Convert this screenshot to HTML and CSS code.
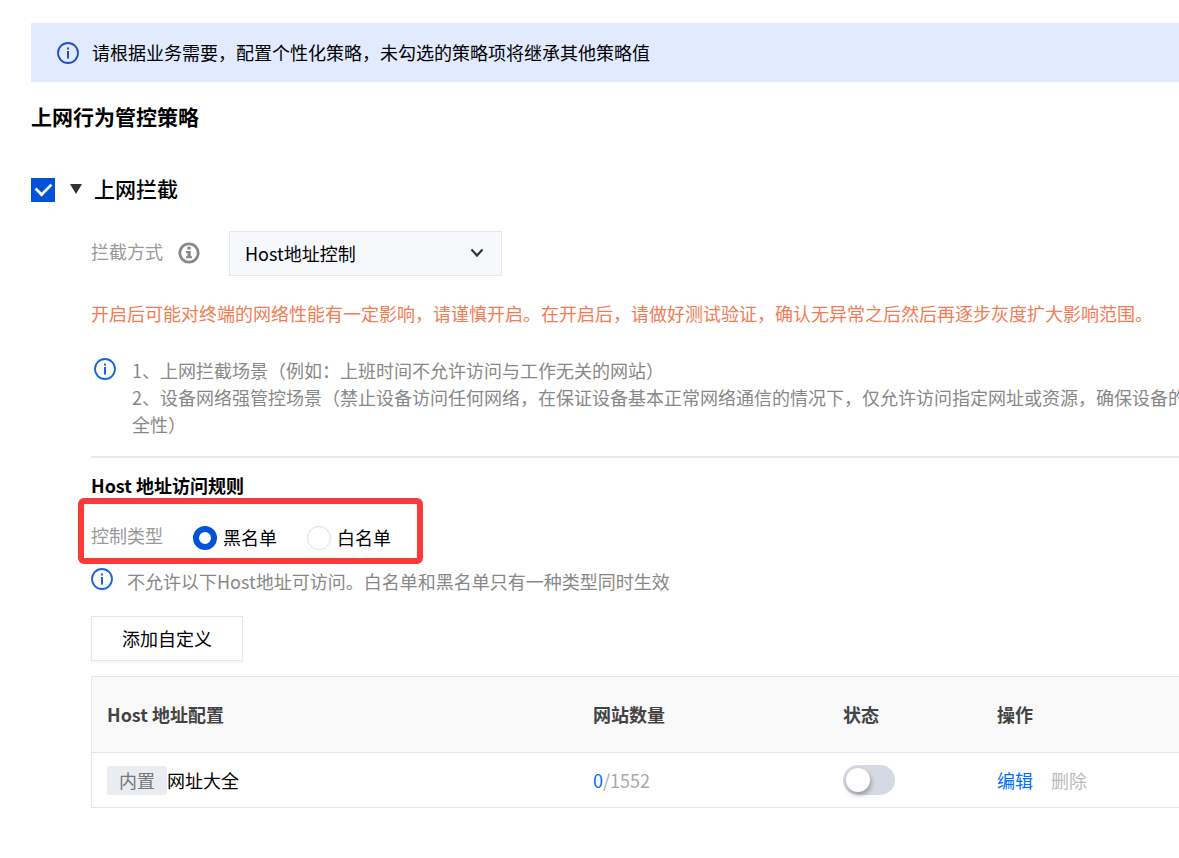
FILE: index.html
```html
<!DOCTYPE html>
<html lang="zh-CN">
<head>
  <meta charset="UTF-8">
  <meta name="viewport" content="width=device-width, initial-scale=1.0">
  <title>上网行为管控策略</title>
  <link rel="stylesheet" href="styles.css">
</head>
<body>
  <svg class="sprite" aria-hidden="true">
    <symbol id="icon-info" viewBox="0 0 22 22">
      <circle cx="11" cy="11" r="10" fill="none" stroke="currentColor" stroke-width="1.8"/>
      <rect x="10" y="5.5" width="2" height="2" fill="currentColor"/>
      <rect x="10" y="9" width="2" height="7.5" fill="currentColor"/>
    </symbol>
  </svg>

  <main class="page">
    <div class="banner">
      <svg class="icon"><use href="#icon-info"/></svg>
      <span>请根据业务需要，配置个性化策略，未勾选的策略项将继承其他策略值</span>
    </div>

    <h1 class="title">上网行为管控策略</h1>

    <div class="section-head">
      <input type="checkbox" class="check" id="block" checked>
      <svg class="caret" viewBox="0 0 12 10"><path d="M0 0h12L6 10z" fill="#333"/></svg>
      <label class="section-name" for="block">上网拦截</label>
    </div>

    <section class="content">
      <div class="mode-row">
        <label class="label" for="mode">拦截方式</label>
        <svg class="help" viewBox="0 0 22 22">
          <circle cx="11" cy="11" r="9.2" fill="none" stroke="#888" stroke-width="2.8"/>
          <path d="M9.3 4.8h3.4v2.6H9.3zM8 9h4.7v5.3H14v2H8v-2h1.5V11H8z" fill="#888"/>
        </svg>
        <div class="select-box">
          <select class="select" id="mode">
            <option>Host地址控制</option>
          </select>
          <svg class="arrow" viewBox="0 0 14 10"><path d="M1.5 1.5L7 7.5l5.5-6" fill="none" stroke="#333" stroke-width="2.2"/></svg>
        </div>
      </div>

      <p class="warning">开启后可能对终端的网络性能有一定影响，请谨慎开启。在开启后，请做好测试验证，确认无异常之后然后再逐步灰度扩大影响范围。</p>

      <div class="notes">
        <svg class="icon"><use href="#icon-info"/></svg>
        <p>1、上网拦截场景（例如：上班时间不允许访问与工作无关的网站）<br>2、设备网络强管控场景（禁止设备访问任何网络，在保证设备基本正常网络通信的情况下，仅允许访问指定网址或资源，确保设备的<br>全性）</p>
      </div>

      <h2 class="subtitle">Host 地址访问规则</h2>

      <div class="type-box" role="radiogroup" aria-labelledby="type-label">
        <span class="label" id="type-label">控制类型</span>
        <label class="option"><input type="radio" class="radio" name="type" checked>黑名单</label>
        <label class="option"><input type="radio" class="radio" name="type">白名单</label>
      </div>

      <div class="tip">
        <svg class="icon"><use href="#icon-info"/></svg>
        <span>不允许以下Host地址可访问。白名单和黑名单只有一种类型同时生效</span>
      </div>

      <button type="button" class="btn">添加自定义</button>

      <table class="table">
        <colgroup>
          <col class="col-host">
          <col class="col-count">
          <col class="col-state">
          <col>
        </colgroup>
        <thead>
          <tr><th>Host 地址配置</th><th>网站数量</th><th>状态</th><th>操作</th></tr>
        </thead>
        <tbody>
          <tr>
            <td><div class="host"><span class="tag">内置</span><span>网址大全</span></div></td>
            <td class="count"><a href="#">0</a>/1552</td>
            <td><input type="checkbox" role="switch" class="switch" aria-label="状态"></td>
            <td><div class="actions"><a href="#">编辑</a><button type="button" class="delete" disabled>删除</button></div></td>
          </tr>
        </tbody>
      </table>
    </section>
  </main>
</body>
</html>
```

FILE: styles.css
```css
* {
  box-sizing: border-box;
}
body {
  margin: 0;
  background: #fff;
  color: #000;
  font-family: "Noto Sans CJK SC", sans-serif;
  font-size: 18px;
  line-height: 27px;
  overflow-x: hidden;
}
h1, h2, p {
  margin: 0;
}
input, select, button {
  margin: 0;
  font: inherit;
  color: inherit;
}
a {
  color: #006eff;
  text-decoration: none;
}
.sprite {
  display: none;
}
.page {
  padding: 23px 0 48px 31px;
}
.icon {
  flex: none;
  width: 22px;
  height: 22px;
  color: #1664e0;
  overflow: visible;
}

/* top banner */
.banner {
  display: flex;
  align-items: center;
  gap: 13px;
  padding: 16px 26px;
  background: #e1eaff;
}
.banner .icon {
  color: #1f4fc4;
}
.title {
  margin-top: 18px;
  font-size: 21px;
  line-height: 32px;
}

/* section header */
.section-head {
  display: flex;
  align-items: center;
  margin-top: 40px;
}
.check {
  appearance: none;
  display: grid;
  place-items: center;
  width: 24px;
  height: 24px;
  border: 1px solid #cfd5de;
}
.check:checked {
  background: #0052d9;
  border-color: #0052d9;
}
.check:checked::after {
  content: "";
  width: 14px;
  height: 8px;
  margin-bottom: 4px;
  border: solid #fff;
  border-width: 0 0 3px 3px;
  transform: rotate(-45deg) scale(0.9);
}
.caret {
  width: 12px;
  height: 10px;
  margin: 0 12px 2px 15px;
}
.section-name {
  padding-bottom: 3px;
  font-size: 21px;
  font-weight: 500;
  line-height: 32px;
}
.content {
  padding: 24px 0 0 60px;
}
.label {
  padding-bottom: 4px;
  color: #999;
}

/* mode select */
.mode-row {
  display: flex;
  align-items: center;
}
.help {
  width: 22px;
  height: 22px;
  margin: 0 29px 2px 15px;
}
.select-box {
  position: relative;
}
.select {
  appearance: none;
  width: 273px;
  height: 45px;
  padding: 0 40px 0 15px;
  border: 1px solid #e5e8ef;
  border-radius: 0;
  background: #f7f8fc;
}
.arrow {
  position: absolute;
  top: 17px;
  right: 18px;
  width: 14px;
  height: 10px;
  pointer-events: none;
}
.warning {
  margin-top: 24px;
  color: #f27c54;
}
.notes {
  display: flex;
  gap: 16px;
  margin-top: 30px;
  padding: 0 0 18px 3px;
  border-bottom: 2px solid #e7eaef;
  color: #888;
}
.notes .icon {
  margin-top: 1px;
}
.notes p {
  white-space: nowrap;
}
.subtitle {
  margin-top: 14px;
  font-size: 18px;
  line-height: 27px;
}

/* black / white list */
.type-box {
  display: flex;
  width: 345px;
  margin: -1px 0 0 -13px;
  padding: 18px 7px 5px;
  border: 6px solid #fd3838;
  border-radius: 6px;
}
.option {
  display: flex;
  align-items: center;
  gap: 6px;
  margin-left: 30px;
}
.radio {
  appearance: none;
  width: 24px;
  height: 24px;
  border: 1px solid #dcdfe8;
  border-radius: 50%;
}
.radio:checked {
  border: 6px solid #0052d9;
}
.tip {
  display: flex;
  align-items: flex-start;
  gap: 14px;
  margin: 4px 0 21px;
  color: #888;
}
.btn {
  display: block;
  width: 152px;
  height: 45px;
  border: 1px solid #e3e6ef;
  background: #fff;
  box-shadow: 0 2px 2px #f7f7fa;
}

/* host table */
.table {
  width: 100%;
  margin-top: 15px;
  border-collapse: separate;
  border-spacing: 0;
  border: 1px solid #e3e6ef;
  border-right: 0;
  table-layout: fixed;
}
.col-host {
  width: 486px;
}
.col-count {
  width: 250px;
}
.col-state {
  width: 154px;
}
.table th,
.table td {
  padding: 0 15px;
  text-align: left;
}
.table th {
  height: 76px;
  border-bottom: 1px solid #e3e6ef;
  background: #f9f9f9;
  color: #444;
}
.table td {
  height: 54px;
}
.host {
  display: flex;
  align-items: center;
}
.tag {
  padding: 1px 12px;
  border-radius: 3px;
  background: #e9ecf1;
  color: #777;
}
.count {
  color: #aaa;
}
.switch {
  appearance: none;
  display: flex;
  align-items: center;
  width: 52px;
  height: 30px;
  padding: 3px;
  border-radius: 15px;
  background: #d5d9e2;
}
.switch::before {
  content: "";
  width: 24px;
  height: 24px;
  border-radius: 50%;
  background: #fff;
  box-shadow: 1px 3px 5px rgba(0, 0, 0, 0.3);
}
.switch:checked {
  justify-content: flex-end;
  background: #0052d9;
}
.actions {
  display: flex;
  gap: 18px;
}
.delete {
  padding: 0;
  border: 0;
  background: none;
  color: #bbb;
}
```
